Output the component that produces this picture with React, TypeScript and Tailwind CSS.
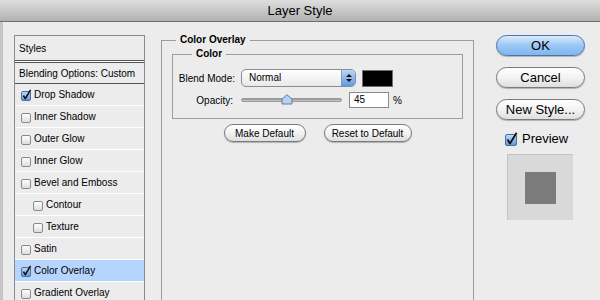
import React from "react";

const font = { fontFamily: '"Liberation Sans", Arial, sans-serif' };

function Check({ checked }: { checked: boolean }) {
  return (
    <svg width="12" height="12" viewBox="0 0 12 12" className="shrink-0">
      <defs>
        <linearGradient id="cbw" x1="0" y1="0" x2="0" y2="1">
          <stop offset="0" stopColor="#ffffff" />
          <stop offset="1" stopColor="#dcdcdc" />
        </linearGradient>
        <linearGradient id="cbb" x1="0" y1="0" x2="0" y2="1">
          <stop offset="0" stopColor="#c5dcf7" />
          <stop offset="1" stopColor="#5f95dd" />
        </linearGradient>
      </defs>
      <rect x="1.5" y="2.5" width="9" height="9" rx="1.5" fill={checked ? "url(#cbb)" : "url(#cbw)"} stroke={checked ? "#4b6f9e" : "#8a8a8a"} />
      {checked && <path d="M3.4 6.6 L5.3 9.6 L10.6 0.8" fill="none" stroke="#111" strokeWidth="1.6" strokeLinejoin="round" />}
    </svg>
  );
}

const rows: { label: string; checked?: boolean; indent?: boolean; active?: boolean }[] = [
  { label: "Drop Shadow", checked: true },
  { label: "Inner Shadow" },
  { label: "Outer Glow" },
  { label: "Inner Glow" },
  { label: "Bevel and Emboss" },
  { label: "Contour", indent: true },
  { label: "Texture", indent: true },
  { label: "Satin" },
  { label: "Color Overlay", checked: true, active: true },
  { label: "Gradient Overlay" },
];

function AquaButton({ children, primary, className }: { children: React.ReactNode; primary?: boolean; className: string }) {
  return (
    <button
      className={`${className} flex items-center justify-center rounded-full border text-black shadow-[0_1px_1px_rgba(0,0,0,0.25)] ${
        primary
          ? "border-[#4e74a8] bg-gradient-to-b from-[#d9ebfd] via-[#9cc6f3] to-[#7fb6f0]"
          : "border-[#7b7b7b] bg-gradient-to-b from-[#ffffff] via-[#f3f3f3] to-[#dedede]"
      }`}
    >
      {children}
    </button>
  );
}

export default function App() {
  return (
    <div className="w-[600px] h-[300px] overflow-hidden bg-[#ececec] text-black" style={font}>
      {/* Title bar */}
      <div className="h-[22px] flex items-center justify-center bg-gradient-to-b from-[#dedede] to-[#b2b2b2] border-b border-[#6e6e6e] text-[13px]">
        Layer Style
      </div>

      <div className="flex items-start h-[278px] border-l-[3px] border-[#c6c6c6]">
        {/* Styles list */}
        <div className="ml-[11px] mt-[13px] w-[131px] h-[300px] border border-[#8a8a8a] text-[10px]">
          <div className="h-[24px] flex items-center pl-[4px]">Styles</div>
          <div className="h-[3px] border-y border-[#555] bg-white" />
          <div className="h-[21px] flex items-center pl-[4px] border-b border-[#555]">Blending Options: Custom</div>
          {rows.map((r) => (
            <div
              key={r.label}
              className={`h-[22px] flex items-center gap-[2px] border-b border-white ${r.indent ? "pl-[17px]" : "pl-[5px]"} ${
                r.active ? "bg-[#b6d5fe]" : ""
              }`}
            >
              <Check checked={!!r.checked} />
              <span>{r.label}</span>
            </div>
          ))}
        </div>

        {/* Color Overlay group */}
        <fieldset className="ml-[16px] mt-[11px] w-[313px] h-[300px] border border-[#9c9c9c] px-[10px]">
          <legend className="ml-[4px] px-[4px] text-[10px] font-bold leading-[14px]">Color Overlay</legend>
          <fieldset className="border border-[#9c9c9c] pl-[5px] pt-[8px] pb-[10px]">
            <legend className="ml-[14px] px-[4px] text-[10px] font-bold leading-[14px]">Color</legend>
            <div className="flex items-center h-[18px] text-[10px]">
              <span className="w-[57px] text-right">Blend Mode:</span>
              <div className="ml-[6px] w-[115px] h-[18px] flex rounded-[5px] border border-[#8c8c8c] bg-gradient-to-b from-white to-[#e9e9e9] overflow-hidden">
                <span className="flex-1 pl-[7px] leading-[16px]">Normal</span>
                <div className="w-[14px] flex flex-col items-center justify-center gap-[2px] border-l border-[#7f9ac0] bg-gradient-to-b from-[#b9d6f6] to-[#5e9ae3]">
                  <svg width="6" height="3" viewBox="0 0 6 3"><path d="M0 3 L3 0 L6 3Z" fill="#111" /></svg>
                  <svg width="6" height="3" viewBox="0 0 6 3"><path d="M0 0 L3 3 L6 0Z" fill="#111" /></svg>
                </div>
              </div>
              <div className="ml-[6px] w-[31px] h-[17px] bg-black border border-[#6f6f6f]" />
            </div>
            <div className="flex items-center h-[16px] mt-[5px] text-[10px]">
              <span className="w-[57px] text-right pr-[2px]">Opacity:</span>
              <div className="ml-[6px] relative w-[101px] h-[12px] flex items-center">
                <div className="w-full h-[4px] rounded-full bg-gradient-to-b from-[#8f8f8f] to-[#d2d2d2] border border-[#9a9a9a]" />
                <svg width="12" height="11" viewBox="0 0 12 11" className="absolute left-[40px] top-[0px]">
                  <path d="M1 5 L6 0.8 L11 5 L11 10 L1 10Z" fill="#b7d2f3" stroke="#5e7ea8" />
                </svg>
              </div>
              <div className="ml-[7px] w-[40px] h-[16px] bg-white border border-[#8a8a8a] pl-[4px] leading-[14px]">45</div>
              <span className="ml-[4px]">%</span>
            </div>
          </fieldset>
          <div className="flex justify-center gap-[18px] mt-[5px] text-[10px]">
            <AquaButton className="w-[82px] h-[18px]">Make Default</AquaButton>
            <AquaButton className="w-[88px] h-[18px]">Reset to Default</AquaButton>
          </div>
        </fieldset>

        {/* Right column */}
        <div className="ml-[22px] mt-[13px] w-[89px] flex flex-col text-[13px]">
          <AquaButton primary className="w-[89px] h-[21px]">OK</AquaButton>
          <AquaButton className="w-[89px] h-[21px] mt-[11px]">Cancel</AquaButton>
          <AquaButton className="w-[89px] h-[21px] mt-[11px]">New Style...</AquaButton>
          <div className="flex items-center gap-[4px] ml-[9px] mt-[11px] h-[16px]">
            <svg width="13" height="14" viewBox="0 0 13 14">
              <defs>
                <linearGradient id="pvb" x1="0" y1="0" x2="0" y2="1">
                  <stop offset="0" stopColor="#c5dcf7" />
                  <stop offset="1" stopColor="#5f95dd" />
                </linearGradient>
              </defs>
              <rect x="0.5" y="2.5" width="11" height="11" rx="1.5" fill="url(#pvb)" stroke="#4b6f9e" />
              <path d="M2.5 7.5 L5 11.5 L11.6 0.8" fill="none" stroke="#111" strokeWidth="1.8" strokeLinejoin="round" />
            </svg>
            <span>Preview</span>
          </div>
          <div className="ml-[11px] mt-[7px] w-[66px] h-[66px] bg-[#d9d9d9] border-t border-l border-[#c4c4c4] flex items-center justify-center">
            <div className="w-[31px] h-[32px] bg-[#7b7b7b]" />
          </div>
        </div>
      </div>
    </div>
  );
}
